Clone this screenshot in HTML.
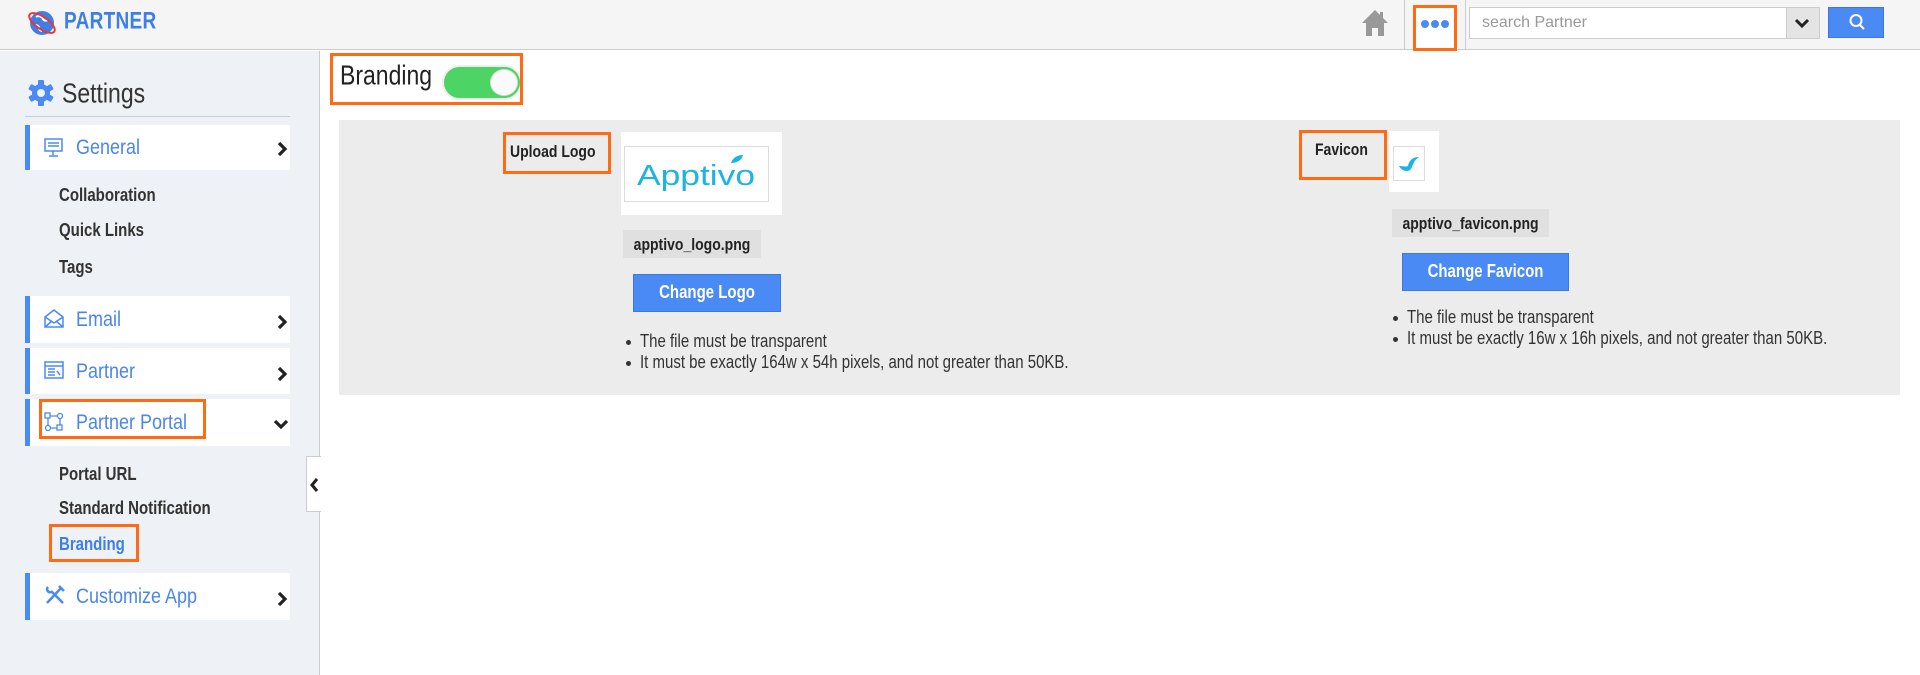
<!DOCTYPE html>
<html><head><meta charset="utf-8"><style>
*{box-sizing:border-box;margin:0;padding:0}
body{width:1920px;height:675px;overflow:hidden;background:#fff;font-family:"Liberation Sans",Arial,sans-serif;position:relative}
.a{position:absolute}
.t{display:inline-block;transform:scaleY(1.2);transform-origin:center}
.ob{position:absolute;border:3px solid #ff6a13}
.item{position:absolute;left:25px;width:265px;background:#fff;border-left:5px solid #4a8af4}
.item .lbl{position:absolute;left:46px;font-size:18px;color:#4a86e8}
.item .ic{position:absolute;left:14px}
.chev{position:absolute;left:246px}
.sub{position:absolute;left:59px;font-size:15px;font-weight:bold;color:#333}
.btn{position:absolute;background:#4a8af4;border:1px solid #3b78e0;color:#fff;font-weight:bold;font-size:15px;text-align:center}
.chip{position:absolute;background:#e0e0e0;font-weight:bold;font-size:14px;color:#222;text-align:center}
ul{position:absolute;font-size:15px;color:#333;list-style:none}
ul li{position:relative;padding-left:14px;height:21px;line-height:21px}
ul li:before{content:"";position:absolute;left:0;top:9px;width:5px;height:5px;border-radius:50%;background:#333}
</style></head><body>
<!-- header -->
<div class="a" style="left:0;top:0;width:1920px;height:50px;background:#f5f5f5;border-bottom:1px solid #ccc"></div>
<svg class="a" style="left:26px;top:8px" width="32" height="30" viewBox="0 0 32 30"><circle cx="16" cy="15" r="12" fill="#3d7fe6"/><path d="M10 9c3-2 6 0 7 2s3 2 5 1M9 17c2 0 4 1 4 3s2 3 3 3" stroke="#fff" stroke-width="2" fill="none"/><ellipse cx="16" cy="15" rx="15" ry="6" transform="rotate(35 16 15)" stroke="#e33" stroke-width="2" fill="none"/></svg>
<div class="a" style="left:64px;top:11px;font-size:19px;font-weight:bold;color:#3d7fe6;letter-spacing:0.3px"><span class="t" style="transform:scaleY(1.25)">PARTNER</span></div>
<svg class="a" style="left:1362px;top:9px" width="26" height="28" viewBox="0 0 26 28"><path d="M13 1L0 14h4v13h6v-8h6v8h6V14h4z" fill="#999"/><rect x="18" y="3" width="3" height="7" fill="#999"/></svg>
<div class="a" style="left:1404px;top:0;width:1px;height:50px;background:#ccc"></div>
<div class="a" style="left:1465px;top:0;width:1px;height:50px;background:#ccc"></div>
<div class="a" style="left:1414px;top:6px;width:43px;height:45px;background:#fff"></div>
<svg class="a" style="left:1420px;top:19px" width="30" height="10"><circle cx="5" cy="5" r="4" fill="#4a8af4"/><circle cx="15" cy="5" r="4" fill="#4a8af4"/><circle cx="25" cy="5" r="4" fill="#4a8af4"/></svg>
<div class="ob" style="left:1413px;top:5px;width:44px;height:46px"></div>
<div class="a" style="left:1469px;top:7px;width:351px;height:32px;background:#fff;border:1px solid #ccc"></div>
<div class="a" style="left:1482px;top:14px;font-size:16px;color:#999">search Partner</div>
<div class="a" style="left:1786px;top:8px;width:33px;height:30px;background:#e4e4e4;border-left:1px solid #ccc"></div>
<svg class="a" style="left:1794px;top:17px" width="16" height="12"><path d="M2 3l6 6 6-6" stroke="#222" stroke-width="3" fill="none"/></svg>
<div class="a" style="left:1828px;top:7px;width:56px;height:31px;background:#4a8af4;border:1px solid #3b78e0"></div>
<svg class="a" style="left:1848px;top:13px" width="18" height="18"><circle cx="8" cy="7.5" r="5.5" stroke="#fff" stroke-width="2" fill="none"/><path d="M11.5 11.5l4.5 4.5" stroke="#fff" stroke-width="2"/></svg>
<!-- sidebar -->
<div class="a" style="left:0;top:51px;width:320px;height:624px;background:#eef1f5;border-right:1px solid #ccc"></div>
<svg class="a" style="left:27px;top:79px" width="28" height="28" viewBox="0 0 28 28"><g fill="#4a8af4"><circle cx="14" cy="14" r="9"/><rect x="11" y="1" width="6" height="26" rx="1"/><rect x="11" y="1" width="6" height="26" rx="1" transform="rotate(60 14 14)"/><rect x="11" y="1" width="6" height="26" rx="1" transform="rotate(120 14 14)"/></g><circle cx="14" cy="14" r="4" fill="#eef1f5"/></svg>
<div class="a" style="left:62px;top:80px;font-size:23px;color:#333"><span class="t">Settings</span></div>
<div class="a" style="left:25px;top:116px;width:265px;height:1px;background:#ccc"></div>

<div class="item" style="top:125px;height:45px"><svg class="ic" style="top:13px" width="20" height="20"><rect x="1" y="1" width="17" height="12" fill="none" stroke="#4a8af4" stroke-width="1.5"/><path d="M4 5h11M4 8h11M9 13v4M5 18h9" stroke="#4a8af4" stroke-width="1.5"/></svg><div class="lbl" style="top:12px"><span class="t">General</span></div><svg class="chev" style="top:16px" width="12" height="16"><path d="M3 2l6 6-6 6" stroke="#222" stroke-width="3.2" fill="none"/></svg></div>
<div class="sub" style="top:187px"><span class="t">Collaboration</span></div>
<div class="sub" style="top:222px"><span class="t">Quick Links</span></div>
<div class="sub" style="top:259px"><span class="t">Tags</span></div>

<div class="item" style="top:296px;height:47px"><svg class="ic" style="top:13px" width="20" height="20"><path d="M1 8l9-7 9 7v10H1z M1 8l9 6 9-6M1 18l7-6M19 18l-7-6" fill="none" stroke="#4a8af4" stroke-width="1.5"/></svg><div class="lbl" style="top:13px"><span class="t">Email</span></div><svg class="chev" style="top:18px" width="12" height="16"><path d="M3 2l6 6-6 6" stroke="#222" stroke-width="3.2" fill="none"/></svg></div>
<div class="item" style="top:348px;height:46px"><svg class="ic" style="top:13px" width="20" height="20"><rect x="1" y="1" width="18" height="16" fill="none" stroke="#4a8af4" stroke-width="1.5"/><path d="M1 5h18M4 8h7M4 11h7M4 14h7M13 10l3 4" stroke="#4a8af4" stroke-width="1.5"/></svg><div class="lbl" style="top:13px"><span class="t">Partner</span></div><svg class="chev" style="top:18px" width="12" height="16"><path d="M3 2l6 6-6 6" stroke="#222" stroke-width="3.2" fill="none"/></svg></div>
<div class="item" style="top:399px;height:47px"><svg class="ic" style="top:13px" width="20" height="20"><rect x="1" y="1" width="5" height="5" fill="none" stroke="#4a8af4" stroke-width="1.3"/><circle cx="16" cy="4" r="2.5" fill="none" stroke="#4a8af4" stroke-width="1.3"/><circle cx="4" cy="16" r="2.5" fill="none" stroke="#4a8af4" stroke-width="1.3"/><rect x="13" y="13" width="5" height="5" fill="none" stroke="#4a8af4" stroke-width="1.3"/><path d="M6 4h7M16 7v6M4 6v7M7 16h6" stroke="#4a8af4" stroke-width="1.3"/></svg><div class="lbl" style="top:13px"><span class="t">Partner Portal</span></div><svg class="chev" style="top:19px;left:243px" width="16" height="12"><path d="M2 3l6 6 6-6" stroke="#222" stroke-width="3.2" fill="none"/></svg></div>
<div class="ob" style="left:39px;top:399px;width:167px;height:40px"></div>
<div class="sub" style="top:466px"><span class="t">Portal URL</span></div>
<div class="sub" style="top:500px"><span class="t">Standard Notification</span></div>
<div class="sub" style="top:536px;color:#3d7fe6"><span class="t">Branding</span></div>
<div class="ob" style="left:49px;top:524px;width:90px;height:38px"></div>
<div class="item" style="top:573px;height:47px"><svg class="ic" style="top:11px" width="22" height="22"><path d="M3 19L17 4M15 2l5 5M19 19L7 7M4 3a3 3 0 0 0 3 5" stroke="#4a8af4" stroke-width="2.5" fill="none"/></svg><div class="lbl" style="top:13px"><span class="t">Customize App</span></div><svg class="chev" style="top:18px" width="12" height="16"><path d="M3 2l6 6-6 6" stroke="#222" stroke-width="3.2" fill="none"/></svg></div>
<div class="a" style="left:306px;top:456px;width:15px;height:56px;background:#fff;border:1px solid #ccc;border-right:none"></div>
<svg class="a" style="left:309px;top:477px" width="10" height="16"><path d="M8 2L3 8l5 6" stroke="#222" stroke-width="3" fill="none"/></svg>
<!-- content -->
<div class="a" style="left:340px;top:62px;font-size:23px;color:#222"><span class="t">Branding</span></div>
<div class="a" style="left:444px;top:67px;width:76px;height:31px;border-radius:16px;background:#4cd464;box-shadow:0 0 0 2px #eee"></div>
<div class="a" style="left:490px;top:69px;width:28px;height:27px;border-radius:50%;background:#fafafa;border:1px solid #ddd"></div>
<div class="ob" style="left:330px;top:53px;width:193px;height:52px"></div>
<div class="a" style="left:339px;top:120px;width:1561px;height:275px;background:#ececec"></div>
<div class="a" style="left:510px;top:143px;font-size:14px;font-weight:bold;color:#222"><span class="t">Upload Logo</span></div>
<div class="ob" style="left:503px;top:132px;width:108px;height:42px"></div>
<div class="a" style="left:621px;top:132px;width:161px;height:83px;background:#fff"></div>
<div class="a" style="left:624px;top:146px;width:145px;height:56px;background:#fff;border:1px solid #ddd"></div>
<div class="a" style="left:637px;top:162px;font-size:29px;color:#1cb4e3;line-height:1"><span style="display:inline-block;transform:scaleX(1.22);transform-origin:left">Apptivo</span></div>
<svg class="a" style="left:730px;top:154px" width="14" height="10"><path d="M1 9C3 3 8 1 13 1 12 6 7 9 1 9z" fill="#1cb4e3"/></svg>
<div class="chip" style="left:623px;top:230px;width:138px;height:28px;line-height:28px"><span class="t">apptivo_logo.png</span></div>
<div class="btn" style="left:633px;top:274px;width:148px;height:38px;line-height:36px"><span class="t">Change Logo</span></div>
<ul style="left:626px;top:331px"><li><span class="t">The file must be transparent</span></li><li><span class="t">It must be exactly 164w x 54h pixels, and not greater than 50KB.</span></li></ul>
<div class="a" style="left:1315px;top:141px;font-size:14px;font-weight:bold;color:#222"><span class="t">Favicon</span></div>
<div class="ob" style="left:1299px;top:130px;width:88px;height:50px"></div>
<div class="a" style="left:1389px;top:131px;width:50px;height:61px;background:#fff"></div>
<div class="a" style="left:1393px;top:146px;width:32px;height:35px;background:#fff;border:1px solid #ddd"></div>
<svg class="a" style="left:1398px;top:154px" width="22" height="20"><path d="M1 12c3 6 10 6 12 3 2-4 3-9 8-12-7 0-10 4-11 9-2 1-5 0-9 0z" fill="#1cb4e3"/></svg>
<div class="chip" style="left:1392px;top:209px;width:157px;height:28px;line-height:28px;font-size:14px"><span class="t">apptivo_favicon.png</span></div>
<div class="btn" style="left:1402px;top:253px;width:167px;height:38px;line-height:36px"><span class="t">Change Favicon</span></div>
<ul style="left:1393px;top:307px"><li><span class="t">The file must be transparent</span></li><li><span class="t">It must be exactly 16w x 16h pixels, and not greater than 50KB.</span></li></ul>
</body></html>
